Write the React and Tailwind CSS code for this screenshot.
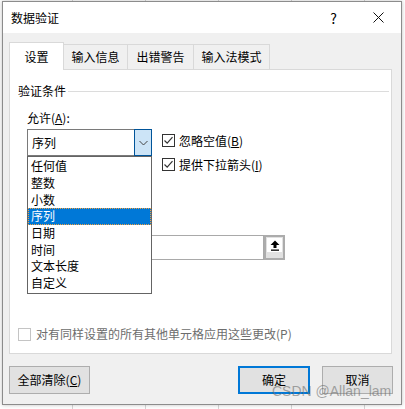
import React from 'react';

const font = { fontFamily: '"Noto Sans CJK SC", "Noto Sans", sans-serif' };

const options = ['任何值', '整数', '小数', '序列', '日期', '时间', '文本长度', '自定义'];

const Check = ({ checked = true, disabled = false }) => (
  <span
    className={`w-[13px] h-[13px] border bg-white flex items-center justify-center shrink-0 ${
      disabled ? 'border-[#c4c4c4]' : 'border-[#333333]'
    }`}
  >
    {checked && (
      <svg width="11" height="11" viewBox="0 0 11 11">
        <path d="M1.5 5.5 L4.2 8.2 L9.5 2.2" fill="none" stroke="#333" strokeWidth="1.2" />
      </svg>
    )}
  </span>
);

const Tab = ({ label, active, w }) =>
  active ? (
    <div className="h-[28px] w-[55px] bg-white border border-b-0 border-[#d9d9d9] flex items-center justify-center relative z-10 -mb-px">
      {label}
    </div>
  ) : (
    <div
      className={`h-[25px] bg-[#f0f0f0] border border-l-0 border-b-0 border-[#d9d9d9] flex items-center justify-center ${w}`}
    >
      {label}
    </div>
  );

const Button = ({ children, primary, className = '' }) => (
  <div
    className={`h-[28px] bg-[#e1e1e1] flex items-center justify-center ${
      primary ? 'border-2 border-[#0078d7]' : 'border border-[#adadad]'
    } ${className}`}
  >
    {children}
  </div>
);

export default function App() {
  return (
    <div
      className="w-[405px] h-[409px] relative overflow-hidden text-[12px] text-black bg-white bg-[repeating-linear-gradient(90deg,transparent_0,transparent_72px,#d6d6d6_72px,#d6d6d6_73px)]"
      style={font}
    >
      <div className="mt-px ml-[2px] w-[400px] h-[404px] border border-[#8c8c8c] bg-[#f0f0f0] flex flex-col shadow-[0_0_4px_rgba(0,0,0,0.25)]">
        {/* title bar */}
        <div className="h-[31px] bg-white flex items-center pl-[8px] shrink-0">
          <span className="text-[12px]">数据验证</span>
          <span className="ml-auto mr-[36px] text-[14px] leading-none">?</span>
          <svg width="11" height="11" viewBox="0 0 11 11" className="mr-[17px]">
            <path d="M0.5 0.5 L10.5 10.5 M10.5 0.5 L0.5 10.5" stroke="#111" strokeWidth="1" />
          </svg>
        </div>

        {/* tabs */}
        <div className="ml-[6px] mt-[9px] flex items-end">
          <Tab label="设置" active />
          <Tab label="输入信息" w="w-[64px]" />
          <Tab label="出错警告" w="w-[66px]" />
          <Tab label="输入法模式" w="w-[76px]" />
        </div>

        {/* panel */}
        <div className="ml-[6px] w-[383px] h-[285px] bg-white border border-[#d9d9d9] flex flex-col">
          <div className="mt-[13px] ml-[8px] mr-[2px] flex items-center h-[16px]">
            <span>验证条件</span>
            <span className="ml-[2px] flex-1 h-px bg-[#dcdcdc]" />
          </div>

          <div className="ml-[17px] mt-[11px] h-[16px] flex items-center">
            允许(<span className="underline">A</span>):
          </div>

          <div className="ml-[17px] mt-[3px] h-[27px] flex items-start">
            <div className="relative w-[125px] h-[27px] border border-[#7a7a7a] bg-white flex items-center">
              <span className="pl-[4px] flex-1">序列</span>
              <div className="w-[18px] h-[27px] -mr-px -my-px border border-[#005499] bg-[#cce4f7] flex items-center justify-center">
                <svg width="9" height="6" viewBox="0 0 9 6">
                  <path d="M0.5 1 L4.5 5 L8.5 1" fill="none" stroke="#444" strokeWidth="1" />
                </svg>
              </div>

              {/* open list */}
              <div className="absolute left-[-1px] top-[26px] w-[125px] h-[138px] border border-[#646464] bg-white z-20 pt-px">
                {options.map((o) =>
                  o === '序列' ? (
                    <div
                      key={o}
                      className="h-[16.7px] bg-[#0078d7] text-white pl-[3px] flex items-center outline-1 outline-dotted outline-[#f0a040] -outline-offset-1"
                    >
                      {o}
                    </div>
                  ) : (
                    <div key={o} className="h-[16.7px] pl-[3px] flex items-center">
                      {o}
                    </div>
                  )
                )}
              </div>
            </div>

            <div className="ml-[10px] mt-[5px] flex flex-col gap-[11px]">
              <div className="flex items-center h-[13px]">
                <Check />
                <span className="ml-[4px]">
                  忽略空值(<span className="underline">B</span>)
                </span>
              </div>
              <div className="flex items-center h-[13px]">
                <Check />
                <span className="ml-[4px]">
                  提供下拉箭头(<span className="underline">I</span>)
                </span>
              </div>
            </div>
          </div>

          {/* source input (behind list) */}
          <div className="ml-[17px] mt-[79px] flex h-[25px]">
            <div className="w-[237px] h-[25px] border border-[#a9a9a9] bg-white" />
            <div className="w-[21px] h-[25px] border-2 border-[#acacac] bg-[#e1e1e1] flex items-start justify-center pt-[1px]">
              <div className="w-[15px] h-[14px] bg-white flex items-center justify-center">
                <svg width="10" height="11" viewBox="0 0 10 11">
                  <path d="M5 0.5 L9.5 5 L6.5 5 L6.5 8 L3.5 8 L3.5 5 L0.5 5 Z" fill="#000" />
                  <rect x="1" y="9.5" width="8" height="1.3" fill="#000" />
                </svg>
              </div>
            </div>
          </div>

          <div className="ml-[8px] mt-[66px] flex items-center h-[16px]">
            <Check checked={false} disabled />
            <span className="ml-[5px] text-[#6d6d6d]">对有同样设置的所有其他单元格应用这些更改(P)</span>
          </div>
        </div>

        {/* buttons */}
        <div className="mt-[12px] ml-[6px] flex">
          <Button className="w-[81px]">
            全部清除(<span className="underline">C</span>)
          </Button>
          <Button primary className="ml-auto w-[72px]">
            确定
          </Button>
          <Button className="ml-[12px] mr-[8px] w-[71px]">取消</Button>
        </div>
      </div>

      <div
        className="absolute left-[272px] top-[384px] text-[14px] text-[rgba(110,110,110,0.6)] leading-none"
        style={{ fontFamily: '"Liberation Sans", Arial, sans-serif' }}
      >
        CSDN @Allan_lam
      </div>
    </div>
  );
}
